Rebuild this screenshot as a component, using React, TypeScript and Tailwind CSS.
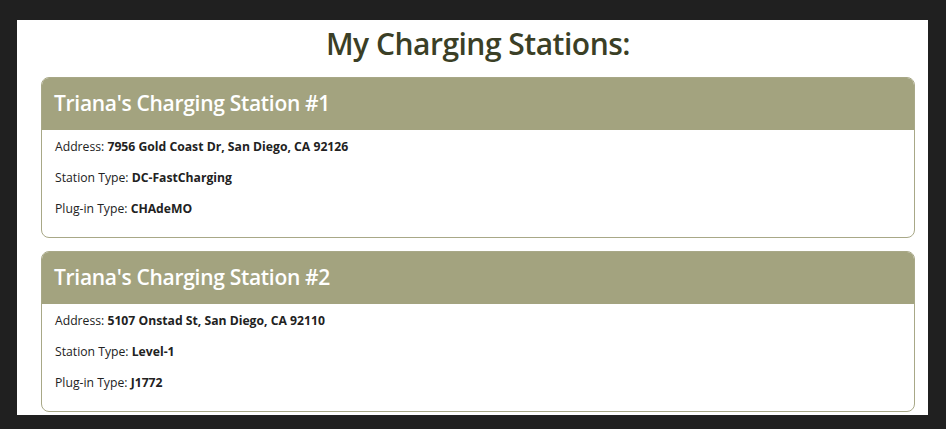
import React from "react";

type Station = {
  name: string;
  address: string;
  stationType: string;
  plugType: string;
};

const stations: Station[] = [
  {
    name: "Triana's Charging Station #1",
    address: "7956 Gold Coast Dr, San Diego, CA 92126",
    stationType: "DC-FastCharging",
    plugType: "CHAdeMO",
  },
  {
    name: "Triana's Charging Station #2",
    address: "5107 Onstad St, San Diego, CA 92110",
    stationType: "Level-1",
    plugType: "J1772",
  },
];

const StationCard = ({ station }: { station: Station }) => {
  return (
    <div className="rounded-[8px] border border-[#a8a887] bg-white overflow-hidden">
      {/* Header */}
      <div className="h-[52px] bg-[#a3a37f] px-[12px] flex items-center">
        <h2 className="text-[21px] font-semibold text-white tracking-[-0.3px]">
          {station.name}
        </h2>
      </div>

      {/* Details */}
      <div className="px-[13px] pt-[1px] pb-[13px] text-[12.2px] text-[#222] leading-[31px]">
        <p>
          Address: <span className="font-bold">{station.address}</span>
        </p>
        <p>
          Station Type: <span className="font-bold">{station.stationType}</span>
        </p>
        <p>
          Plug-in Type: <span className="font-bold">{station.plugType}</span>
        </p>
      </div>
    </div>
  );
};

const App = () => {
  return (
    <div
      className="w-full h-screen bg-[#202020] pt-[20px] pl-[17px] overflow-hidden"
      style={{ fontFamily: '"Open Sans", "Noto Sans", sans-serif' }}
    >
      <div className="w-[911px] h-[395px] bg-white pl-[24px] pr-[13px] flex flex-col">
        {/* Title */}
        <h1 className="h-[57px] pt-[2px] text-center text-[30px] font-semibold text-[#3b3f26] leading-[44px] tracking-[-0.5px]">
          My Charging Stations:
        </h1>

        {/* Station list */}
        <div className="flex flex-col gap-[13px]">
          {stations.map((s) => (
            <StationCard key={s.name} station={s} />
          ))}
        </div>
      </div>
    </div>
  );
};

export default App;
